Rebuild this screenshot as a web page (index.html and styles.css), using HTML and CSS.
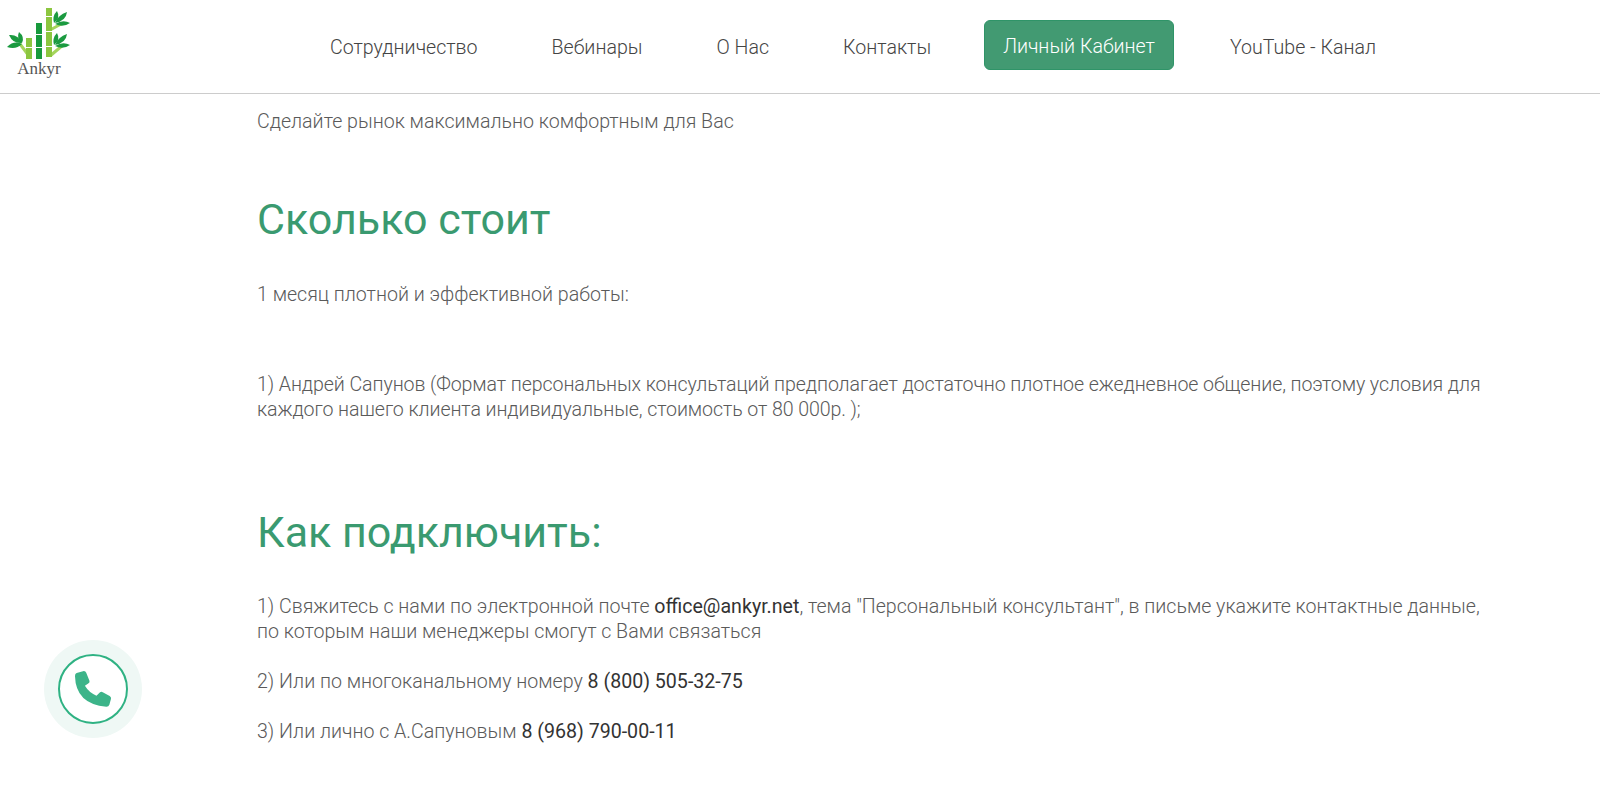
FILE: index.html
```html
<!DOCTYPE html>
<html lang="ru">
<head>
    <meta charset="UTF-8">
    <meta name="viewport" content="width=device-width, initial-scale=1.0">
    <title>Ankyr</title>
    <link rel="stylesheet" href="styles.css">
</head>
<body>
    <header class="header">
        <a class="logo" href="#">
            <svg class="logo-mark" viewBox="0 0 64 52" width="64" height="52">
                <path d="M13 36 L22 48 M43 22 L56 15 M43 48 L56 37" stroke="#a5d45c" stroke-width="3" fill="none"/>
                <rect x="19" y="30" width="6" height="9" fill="#8cc63f"/>
                <rect x="19" y="40" width="6" height="11" fill="#8cc63f"/>
                <rect x="29" y="15" width="6" height="11" fill="#179a3c"/>
                <rect x="29" y="27" width="6" height="12" fill="#179a3c"/>
                <rect x="29" y="40" width="6" height="11" fill="#179a3c"/>
                <rect x="39" y="0" width="6" height="8" fill="#8cc63f"/>
                <rect x="39" y="9" width="6" height="14" fill="#8cc63f"/>
                <rect x="39" y="24" width="6" height="14" fill="#8cc63f"/>
                <rect x="39" y="39" width="6" height="10" fill="#8cc63f"/>
                <g fill="#1b9a40">
                    <path d="M0 39 Q7 32 15 36 Q9 42 0 39Z"/>
                    <path d="M2 27 Q11 26 15 35 Q6 36 2 27Z"/>
                    <path d="M12 24 Q18 29 15 35 Q9 31 12 24Z"/>
                    <path d="M47 15 Q45 8 50 3 Q54 10 47 15Z"/>
                    <path d="M48 15 Q51 7 60 4 Q59 13 48 15Z"/>
                    <path d="M48 16 Q56 11 63 15 Q56 20 48 16Z"/>
                    <path d="M47 37 Q45 30 50 25 Q54 32 47 37Z"/>
                    <path d="M48 37 Q51 29 60 26 Q59 35 48 37Z"/>
                    <path d="M48 38 Q56 33 63 37 Q56 42 48 38Z"/>
                </g>
            </svg>
            <span class="logo-text">Ankyr</span>
        </a>
        <nav class="nav">
            <a class="nav-link" href="#">Сотрудничество</a>
            <a class="nav-link" href="#">Вебинары</a>
            <a class="nav-link" href="#">О Нас</a>
            <a class="nav-link" href="#">Контакты</a>
            <a class="nav-link nav-button" href="#">Личный Кабинет</a>
            <a class="nav-link" href="#">YouTube - Канал</a>
        </nav>
    </header>

    <main class="content">
        <p class="lead">Сделайте рынок максимально комфортным для Вас</p>

        <h2 class="price-title">Сколько стоит</h2>
        <p class="month">1 месяц плотной и эффективной работы:</p>
        <p class="price">1) Андрей Сапунов (Формат персональных консультаций предполагает достаточно плотное ежедневное общение, поэтому условия для каждого нашего клиента индивидуальные, стоимость от 80 000р. );</p>

        <h2 class="connect-title">Как подключить:</h2>
        <p class="step">1) Свяжитесь с нами по электронной почте <a href="#">office@ankyr.net</a>, тема "Персональный консультант", в письме укажите контактные данные, по которым наши менеджеры смогут с Вами связаться</p>
        <p class="step">2) Или по многоканальному номеру <a href="#">8 (800) 505-32-75</a></p>
        <p class="step">3) Или лично с А.Сапуновым <a href="#">8 (968) 790-00-11</a></p>
    </main>

    <a class="call" href="#">
        <span class="call-ring">
            <svg viewBox="160 147 115 115" width="38" height="38">
                <path fill="#3cb489" d="M168 156 L190 150 Q195 150 197 155 L207 180 Q208 185 203 188 L193 195 Q205 215 228 225 L238 215 Q242 211 247 214 L268 226 Q273 229 272 234 L267 252 Q265 258 258 258 Q165 250 163 165 Q163 158 168 156Z"/>
            </svg>
        </span>
    </a>
</body>
</html>
```

FILE: styles.css
```css
* {
    box-sizing: border-box;
    margin: 0;
    padding: 0;
}

body {
    font-family: Roboto, "Liberation Sans", sans-serif;
    font-weight: 300;
    font-size: 19.6px;
    line-height: 25px;
    color: #444;
    background-color: #fff;
}

a {
    color: inherit;
    text-decoration: none;
}

.header {
    display: flex;
    height: 94px;
    border-bottom: 1px solid #ccc;
}

.logo {
    width: 66px;
    margin: 8px 0 0 6px;
    flex-shrink: 0;
    display: flex;
    flex-direction: column;
    align-items: center;
}

.logo-mark {
    display: block;
}

.logo-text {
    font-family: "Liberation Serif", serif;
    font-weight: 400;
    font-size: 17px;
    line-height: 17px;
    color: #555;
}

.nav {
    display: flex;
    align-items: center;
    gap: 38px;
    margin-left: 240px;
    height: 93px;
    padding-top: 1px;
}

.nav-link {
    padding: 0 18px;
}

.nav-button {
    display: flex;
    align-items: center;
    height: 50px;
    margin: -5px 0 0 -3px;
    padding: 4px 18px 0;
    background-color: #429a72;
    border: 1px solid #2f9468;
    border-radius: 6px;
    color: #fff;
}

.content {
    width: 1232px;
    margin-left: 257px;
    color: #5a5a5a;
}

.content a {
    color: #333;
    font-weight: 400;
}

.lead {
    margin-top: 15px;
}

h2 {
    font-weight: 400;
    font-size: 43px;
    line-height: 54px;
    color: #3a9a70;
}

.price-title {
    margin-top: 58px;
}

.month {
    margin-top: 36px;
}

.price {
    margin-top: 65px;
    letter-spacing: -0.09px;
}

.connect-title {
    margin-top: 83px;
}

.step {
    margin-top: 25px;
}

.connect-title + .step {
    margin-top: 35px;
}

.call {
    position: fixed;
    left: 44px;
    top: 640px;
    width: 98px;
    height: 98px;
    border-radius: 50%;
    background-color: #eff8f5;
    display: flex;
    align-items: center;
    justify-content: center;
}

.call-ring {
    width: 70px;
    height: 70px;
    border: 2px solid #2fb283;
    border-radius: 50%;
    background-color: #fff;
    display: flex;
    align-items: center;
    justify-content: center;
}
```
